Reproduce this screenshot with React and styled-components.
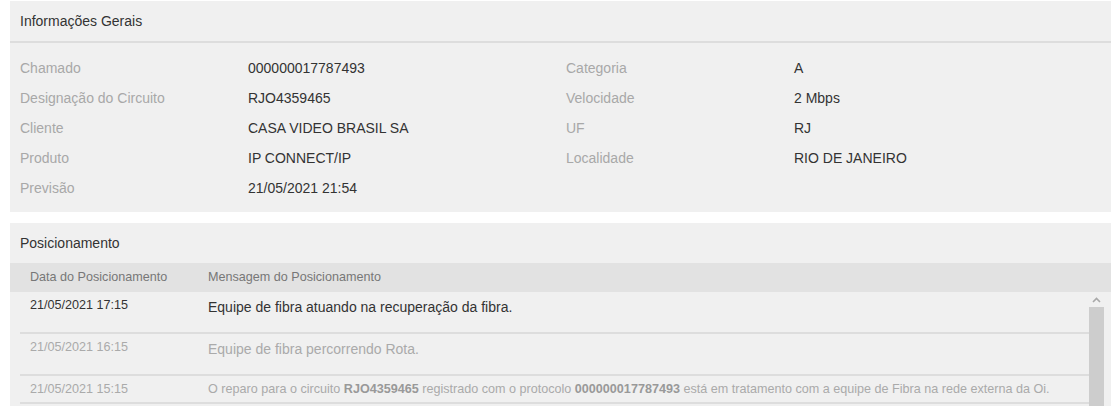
import styled, { createGlobalStyle } from "styled-components";

const GlobalStyle = createGlobalStyle`
  html, body {
    margin: 0;
    padding: 0;
    background: #ffffff;
    overflow: hidden;
  }
  body {
    font-family: "Liberation Sans", Arial, sans-serif;
    font-size: 14px;
    color: #333;
  }
`;

const info = [
  ["Chamado", "000000017787493", "Categoria", "A"],
  ["Designação do Circuito", "RJO4359465", "Velocidade", "2 Mbps"],
  ["Cliente", "CASA VIDEO BRASIL SA", "UF", "RJ"],
  ["Produto", "IP CONNECT/IP", "Localidade", "RIO DE JANEIRO"],
  ["Previsão", "21/05/2021 21:54", "", ""],
];

const App = () => {
  return (
    <Page>
      <GlobalStyle />
      <Panel>
        <PanelTitle $border>Informações Gerais</PanelTitle>
        <InfoGrid>
          {info.map((row, i) => (
            <InfoRow key={i}>
              <Label>{row[0]}</Label>
              <Value>{row[1]}</Value>
              <Label>{row[2]}</Label>
              <Value>{row[3]}</Value>
            </InfoRow>
          ))}
        </InfoGrid>
      </Panel>

      <Panel>
        <PanelTitle>Posicionamento</PanelTitle>
        <TableHead>
          <HeadCell>Data do Posicionamento</HeadCell>
          <HeadCell>Mensagem do Posicionamento</HeadCell>
        </TableHead>
        <TableBody>
          <Rows>
            <Row>
              <DateCell $active>21/05/2021 17:15</DateCell>
              <Message $active>Equipe de fibra atuando na recuperação da fibra.</Message>
            </Row>
            <Row>
              <DateCell>21/05/2021 16:15</DateCell>
              <Message>Equipe de fibra percorrendo Rota.</Message>
            </Row>
            <Row>
              <DateCell>21/05/2021 15:15</DateCell>
              <Message $small>
                O reparo para o circuito <b>RJO4359465</b> registrado com o protocolo{" "}
                <b>000000017787493</b> está em tratamento com a equipe de Fibra na rede externa da Oi.
              </Message>
            </Row>
          </Rows>
          <Scrollbar>
            <svg width="9" height="6" viewBox="0 0 9 6">
              <path d="M1 5 L4.5 1.5 L8 5" fill="none" stroke="#a8a8a8" strokeWidth="1.6" />
            </svg>
            <Thumb />
          </Scrollbar>
        </TableBody>
      </Panel>
    </Page>
  );
};

export default App;

const Page = styled.div`
  display: flex;
  flex-direction: column;
  gap: 11px;
  padding: 1px 0 0 10px;
`;

const Panel = styled.div`
  background: #f0f0f0;
`;

const PanelTitle = styled.div`
  height: 40px;
  line-height: 40px;
  padding-left: 10px;
  font-size: 14px;
  color: #333;
  border-bottom: ${(p) => (p.$border ? "2px solid #dddddd" : "none")};
`;

const InfoGrid = styled.div`
  padding: 10px 0 9px 10px;
`;

const InfoRow = styled.div`
  display: grid;
  grid-template-columns: 228px 318px 228px 1fr;
  height: 30px;
  align-items: center;
`;

const Label = styled.span`
  color: #a8a8a8;
  font-size: 14px;
`;

const Value = styled.span`
  color: #333;
  font-size: 14px;
`;

const TableHead = styled.div`
  display: grid;
  grid-template-columns: 178px 1fr;
  height: 29px;
  line-height: 29px;
  padding-left: 10px;
  background: #e2e2e2;
`;

const HeadCell = styled.div`
  padding: 0 10px;
  font-size: 12.6px;
  color: #777;
`;

const TableBody = styled.div`
  display: flex;
  height: 140px;
  overflow: hidden;
  padding: 0 7px 0 10px;
`;

const Rows = styled.div`
  flex: 1;
`;

const Row = styled.div`
  display: grid;
  grid-template-columns: 178px 1fr;
  border-bottom: 2px solid #dddddd;
  padding: 5px 0;
`;

const DateCell = styled.div`
  padding: 0 10px;
  font-size: 12.6px;
  line-height: 16px;
  color: ${(p) => (p.$active ? "#333" : "#aaa")};
`;

const Message = styled.p`
  margin: ${(p) => (p.$small ? "0" : "0 0 10px")};
  padding: 0 10px;
  font-size: ${(p) => (p.$small ? "12.6px" : "14px")};
  line-height: ${(p) => (p.$small ? "16px" : "20px")};
  color: ${(p) => (p.$active ? "#333" : "#aaa")};

  & b {
    color: #999;
  }
`;

const Scrollbar = styled.div`
  width: 15px;
  display: flex;
  flex-direction: column;
  align-items: center;
  padding-top: 5px;
  gap: 4px;
`;

const Thumb = styled.div`
  width: 15px;
  flex: 1;
  background: #cdcdcd;
`;
